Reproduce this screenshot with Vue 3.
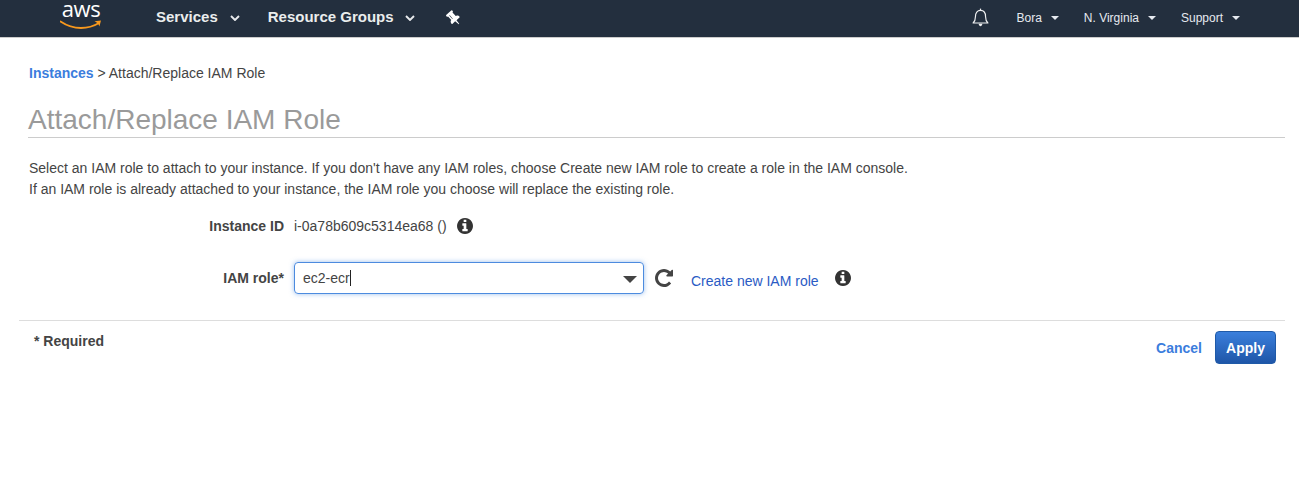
<script setup>
const info = "M1152 1376v-160q0-14-9-23t-23-9h-96v-512q0-14-9-23t-23-9h-320q-14 0-23 9t-9 23v160q0 14 9 23t23 9h96v320h-96q-14 0-23 9t-9 23v160q0 14 9 23t23 9h448q14 0 23-9t9-23zm-128-896v-160q0-14-9-23t-23-9h-192q-14 0-23 9t-9 23v160q0 14 9 23t23 9h192q14 0 23-9t9-23zm640 416q0 209-103 385.5t-279.5 279.5-385.5 103-385.5-103-279.5-279.5-103-385.5 103-385.5 279.5-279.5 385.5-103 385.5 103 279.5 279.5 103 385.5z"
const accountMenus = [
  { label: 'Bora', cls: 'm-bora' },
  { label: 'N. Virginia', cls: 'm-region' },
  { label: 'Support', cls: 'm-support' }
]
</script>

<template>
  <div class="page">
    <header class="nav">
      <div class="logo">
        <span class="logo-text">aws</span>
        <svg class="smile" viewBox="0 0 42 9" width="42" height="9">
          <path d="M0.5 1.5C8 6.5 16 8 21 8C28 8 34 6 39 3" fill="none" stroke="#f7981d" stroke-width="1.8" stroke-linecap="round"/>
          <path d="M34.5 1.2L41 0.6L39.4 6.4C39 4.2 37 2.4 34.5 1.2Z" fill="#f7981d"/>
        </svg>
      </div>
      <a class="nav-main services">Services</a>
      <svg class="chev" viewBox="0 0 10 6" width="10" height="6"><path d="M1 1L5 5L9 1" fill="none" stroke="#e8eaed" stroke-width="1.9"/></svg>
      <a class="nav-main groups">Resource Groups</a>
      <svg class="chev chev-b" viewBox="0 0 10 6" width="10" height="6"><path d="M1 1L5 5L9 1" fill="none" stroke="#e8eaed" stroke-width="1.9"/></svg>
      <svg class="pin" viewBox="0 0 1152 1792" width="11" height="16"><path fill="#ffffff" d="M480 864v-448q0-14-9-23t-23-9-23 9-9 23v448q0 14 9 23t23 9 23-9 9-23zm672 352q0 26-19 45t-45 19h-429l-51 483q-2 12-10.5 20.5t-20.5 8.5h-1q-27 0-32-27l-76-485h-404q-26 0-45-19t-19-45q0-123 78.5-221.5t177.5-98.5v-512q-52 0-90-38t-38-90 38-90 90-38h640q52 0 90 38t38 90-38 90-90 38v512q99 0 177.5 98.5t78.5 221.5z"/></svg>
      <div class="spacer"></div>
      <svg class="bell" viewBox="0 0 16 18" width="17" height="19">
        <path d="M1 14.2C2.6 12.6 3.2 11 3.2 8.2C3.2 4.6 5 2.3 8 2.3C11 2.3 12.8 4.6 12.8 8.2C12.8 11 13.4 12.6 15 14.2Z" fill="none" stroke="#f0f1f2" stroke-width="1.1" stroke-linejoin="round"/>
        <path d="M6.2 15H9.8C9.6 16.6 8.8 17.2 8 17.2C7.2 17.2 6.4 16.6 6.2 15Z" fill="#f0f1f2"/>
        <path d="M8 0.6V2.2" stroke="#f0f1f2" stroke-width="1.2"/>
      </svg>
      <div v-for="m in accountMenus" :key="m.label" class="acct" :class="m.cls">
        <span>{{ m.label }}</span><i class="caret"></i>
      </div>
    </header>

    <main class="content">
      <div class="crumbs"><a class="crumb-link">Instances</a> &gt; Attach/Replace IAM Role</div>
      <h1 class="title">Attach/Replace IAM Role</h1>
      <p class="intro">Select an IAM role to attach to your instance. If you don't have any IAM roles, choose Create new IAM role to create a role in the IAM console.<br>If an IAM role is already attached to your instance, the IAM role you choose will replace the existing role.</p>

      <div class="row row-id">
        <label class="lbl">Instance ID</label>
        <span class="val">i-0a78b609c5314ea68 ()</span>
        <svg class="info info-a" viewBox="128 128 1536 1536" width="16" height="16"><path :d="info" fill="#333"/></svg>
      </div>

      <div class="row row-role">
        <label class="lbl">IAM role*</label>
        <div class="select">
          <span class="sel-text">ec2-ecr</span><i class="cursor"></i>
          <i class="sel-caret"></i>
        </div>
        <svg class="refresh" viewBox="128 128 1536 1536" width="18" height="18"><path fill="#444" d="M1664 256v448q0 26-19 45t-45 19h-448q-42 0-59-40-17-39 14-69l138-138q-148-137-349-137-104 0-198.5 40.5t-163.5 109.5-109.5 163.5-40.5 198.5 40.5 198.5 109.5 163.5 163.5 109.5 198.5 40.5q119 0 225-52t179-147q7-10 23-12 15 0 25 9l137 138q9 8 9.5 20.5t-7.5 22.5q-109 132-264 204.5t-327 72.5q-156 0-298-61t-245-164-164-245-61-298 61-298 164-245 245-164 298-61q147 0 284.5 55.5t244.5 156.5l130-129q29-31 70-14 39 17 39 59z"/></svg>
        <a class="create">Create new IAM role</a>
        <svg class="info info-b" viewBox="128 128 1536 1536" width="16" height="16"><path :d="info" fill="#333"/></svg>
      </div>

      <div class="footer">
        <span class="req">* Required</span>
        <div class="actions">
          <a class="cancel">Cancel</a>
          <button class="apply">Apply</button>
        </div>
      </div>
    </main>
  </div>
</template>

<style>
html, body { margin: 0; background: #fff; }
</style>

<style scoped>
.page {
  width: 1299px;
  height: 488px;
  overflow: hidden;
  font-family: "Liberation Sans", Arial, sans-serif;
  font-size: 14px;
  color: #444;
}
.nav {
  height: 37px;
  box-sizing: content-box;
  background: #232f3e;
  border-bottom: 1px solid #ccc;
  display: flex;
  align-items: center;
  color: #f0f1f2;
}
.logo {
  width: 42px;
  height: 37px;
  margin-left: 60px;
}
.logo-text {
  display: block;
  font-family: "Open Sans", "Liberation Sans", sans-serif;
  font-size: 22px;
  line-height: 16px;
  letter-spacing: -0.5px;
  color: #fff;
  text-align: center;
}
.smile { display: block; margin-top: 4px; }
.nav-main {
  font-size: 15px;
  font-weight: 700;
  color: #eaeded;
  margin-top: -4px;
}
.services { margin-left: 54px; }
.groups { margin-left: 28px; }
.chev { margin-left: 12px; margin-top: -2px; }
.chev-b { margin-left: 11px; }
.pin { margin-left: 33px; transform: rotate(-42deg) scale(1.05); margin-top: -2px; }
.spacer { flex: 1; }
.bell { margin-right: 27px; margin-top: -2px; }
.acct {
  font-size: 12px;
  color: #e6eaf0;
  display: flex;
  align-items: center;
  margin-top: -2px;
}
.m-bora { margin-right: 25px; }
.m-region { margin-right: 25px; }
.m-support { margin-right: 59px; }
.caret {
  width: 0;
  height: 0;
  margin-left: 9px;
  border-left: 4px solid transparent;
  border-right: 4px solid transparent;
  border-top: 4px solid #e6eaf0;
}
.content { padding: 0 14px 0 19px; }
.crumbs {
  margin: 27px 0 0 10px;
  line-height: 16px;
}
.crumb-link { color: #3b7ddd; font-weight: 700; }
.title {
  margin: 23px 0 0 9px;
  padding-bottom: 1px;
  font-size: 28px;
  font-weight: 400;
  line-height: 32px;
  color: #9a9a9a;
  border-bottom: 1px solid #ccc;
}
.intro {
  margin: 20px 0 0 10px;
  line-height: 21px;
}
.row { display: flex; align-items: center; }
.row-id { margin-top: 15px; height: 22px; }
.row-role { margin-top: 25px; height: 32px; }
.lbl {
  width: 265px;
  text-align: right;
  font-weight: 700;
  flex: none;
}
.val { margin-left: 10px; }
.info-a { margin-left: 10px; }
.select {
  margin-left: 10px;
  width: 350px;
  height: 32px;
  box-sizing: border-box;
  border: 1px solid #4c8bdf;
  border-radius: 4px;
  box-shadow: 0 0 5px rgba(76, 139, 223, 0.55);
  padding: 0 8px;
  display: flex;
  align-items: center;
  color: #444;
  position: relative;
}
.cursor { width: 1px; height: 16px; background: #222; }
.sel-caret {
  position: absolute;
  right: 6px;
  top: 13px;
  width: 0;
  height: 0;
  border-left: 7px solid transparent;
  border-right: 7px solid transparent;
  border-top: 7px solid #444;
}
.refresh { margin-left: 11px; }
.create { margin-left: 18px; margin-top: 5px; color: #2a5bc4; }
.info-b { margin-left: 16px; margin-top: -1px; }
.footer {
  margin-top: 26px;
  border-top: 1px solid #ddd;
  display: flex;
  justify-content: space-between;
}
.req {
  margin: 12px 0 0 15px;
  font-weight: 700;
  line-height: 16px;
}
.actions {
  display: flex;
  align-items: center;
  margin: 10px 9px 0 0;
}
.cancel { color: #3b7ddd; font-weight: 700; }
.apply {
  margin-left: 13px;
  width: 61px;
  height: 33px;
  border: 1px solid #1f5aa8;
  border-radius: 4px;
  background: linear-gradient(#3a7fdc, #1f56a8);
  color: #fff;
  font-family: inherit;
  font-size: 14px;
  font-weight: 700;
  padding: 0;
}
</style>
